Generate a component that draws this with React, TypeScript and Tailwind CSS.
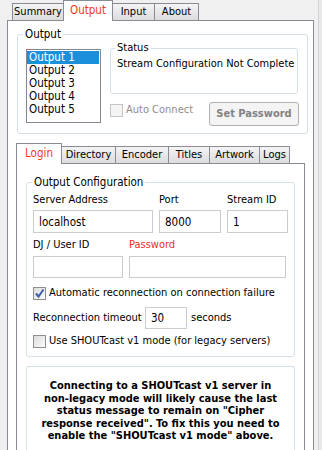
import React from "react";

const TopTab = ({ label, w, active }: { label: string; w: string; active?: boolean }) =>
  active ? (
    <div
      className={`${w} h-[21px] -mb-px -ml-px bg-white border border-b-0 border-[#898c95] flex items-center justify-center text-[11.5px] text-[#f5371b] relative z-10 pb-[3px]`}
    >
      {label}
    </div>
  ) : (
    <div
      className={`${w} h-[17px] -ml-px first:ml-0 bg-gradient-to-b from-[#f4f4f4] to-[#dcdcdc] border border-b-0 border-[#898c95] flex items-center justify-center`}
    >
      {label}
    </div>
  );

const Check = ({ checked, disabled }: { checked?: boolean; disabled?: boolean }) => (
  <div
    className={
      disabled
        ? "w-[13px] h-[13px] border border-[#c5c5c5] bg-[#f4f4f4] shrink-0"
        : "w-[13px] h-[13px] border border-[#8e8f8f] bg-gradient-to-br from-[#dcdcdc] to-[#fbfbfb] shrink-0 flex items-center justify-center"
    }
  >
    {checked && (
      <svg width="11" height="11" viewBox="0 0 11 11">
        <path d="M2 5.5 L4.5 8.5 L9.5 1.5" stroke="#3d5ea8" strokeWidth="2" fill="none" />
      </svg>
    )}
  </div>
);

const Input = ({ w, h, value }: { w: string; h: string; value?: string }) => (
  <div className={`${w} ${h} border border-[#c9cdd2] bg-white flex items-center pl-[5px] text-[11.5px]`}>
    {value}
  </div>
);

export default function App() {
  const outputs = ["Output 1", "Output 2", "Output 3", "Output 4", "Output 5"];
  return (
    <div className="w-[322px] h-[450px] overflow-hidden bg-[#f0f0f0] flex font-['DejaVu_Sans_Condensed','Liberation_Sans',sans-serif] text-[11px] leading-[14px] text-black">
      <div className="w-[7px] shrink-0" />
      <div className="w-[307px] shrink-0 flex flex-col">
        {/* main tabs */}
        <div className="h-[20px] flex items-end pl-[5px] relative z-10">
          <TopTab label="Summary" w="w-[52px]" />
          <TopTab label="Output" w="w-[50px]" active />
          <TopTab label="Input" w="w-[43px]" />
          <TopTab label="About" w="w-[45px]" />
        </div>
        <div className="flex-1 bg-white border border-b-0 border-[#898c95] flex flex-col">
          {/* Output group */}
          <fieldset className="ml-[9px] mr-[7px] mt-[6px] border border-[#d5dfe5] rounded-[3px] px-[8px] pb-[7px]">
            <legend className="px-[2px] -ml-[3px] leading-[14px] text-[11.5px]">Output</legend>
            <div className="flex">
              <div className="w-[75px] h-[74px] mt-[8px] border border-[#828790] bg-white pt-px shrink-0 text-[11.5px]">
                {outputs.map((o, i) => (
                  <div
                    key={o}
                    className={
                      i === 0
                        ? "h-[13px] leading-[13px] pl-[2px] mr-px bg-[#1c8fdb] text-white"
                        : "h-[13px] leading-[13px] pl-[2px]"
                    }
                  >
                    {o}
                  </div>
                ))}
              </div>
              <div className="ml-[9px] w-[189px] flex flex-col">
                <fieldset className="w-[188px] h-[53px] border border-[#d5dfe5] rounded-[3px] pl-[4px] pt-[2px]">
                  <legend className="px-[2px] leading-[14px]">Status</legend>
                  <div className="pl-[2px] whitespace-nowrap">Stream Configuration Not Complete</div>
                </fieldset>
                <div className="flex items-start justify-between mt-[8px]">
                  <div className="flex items-center gap-[3px] mt-px">
                    <Check disabled />
                    <span className="text-[#8d8d8d]">Auto Connect</span>
                  </div>
                  <div className="w-[90px] h-[24px] border border-[#adb2b5] rounded-[3px] bg-[#f4f4f4] flex items-center justify-center font-bold text-[#838383]">
                    Set Password
                  </div>
                </div>
              </div>
            </div>
          </fieldset>

          {/* sub tabs */}
          <div className="h-[20px] mt-[9px] ml-[8px] flex items-end relative z-10">
            <div className="w-[46px] h-[21px] -mb-px bg-white border border-b-0 border-[#898c95] flex items-center justify-center text-[11.5px] text-[#f5371b] pb-[3px]">
              Login
            </div>
            <TopTab label="Directory" w="w-[55px]" />
            <TopTab label="Encoder" w="w-[54px]" />
            <TopTab label="Titles" w="w-[42px]" />
            <TopTab label="Artwork" w="w-[51px]" />
            <TopTab label="Logs" w="w-[31px]" />
          </div>
          <div className="flex-1 ml-[8px] mr-[8px] border border-b-0 border-[#898c95] bg-white flex flex-col">
            <fieldset className="ml-[9px] mr-[9px] mt-[11px] border border-[#d5dfe5] rounded-[3px] px-[6px] pt-[4px] pb-[8px]">
              <legend className="px-[2px] -ml-px leading-[14px] text-[11.5px]">Output Configuration</legend>
              <div className="flex gap-[6px]">
                <div className="flex flex-col">
                  <span className="leading-[14px]">Server Address</span>
                  <div className="mt-[3px]">
                    <Input w="w-[120px]" h="h-[23px]" value="localhost" />
                  </div>
                </div>
                <div className="flex flex-col">
                  <span className="leading-[14px]">Port</span>
                  <div className="mt-[3px]">
                    <Input w="w-[62px]" h="h-[23px]" value="8000" />
                  </div>
                </div>
                <div className="flex flex-col">
                  <span className="leading-[14px]">Stream ID</span>
                  <div className="mt-[3px]">
                    <Input w="w-[61px]" h="h-[23px]" value="1" />
                  </div>
                </div>
              </div>
              <div className="flex gap-[6px] mt-[5px]">
                <div className="flex flex-col">
                  <span className="leading-[14px]">DJ / User ID</span>
                  <div className="mt-[4px]">
                    <Input w="w-[90px]" h="h-[22px]" />
                  </div>
                </div>
                <div className="flex flex-col">
                  <span className="leading-[14px] text-[#e8301c]">Password</span>
                  <div className="mt-[4px]">
                    <Input w="w-[157px]" h="h-[22px]" />
                  </div>
                </div>
              </div>
              <div className="flex items-center gap-[3px] mt-[8px] h-[14px]">
                <Check checked />
                <span className="whitespace-nowrap">Automatic reconnection on connection failure</span>
              </div>
              <div className="flex items-center mt-[7px]">
                <span className="w-[112px] whitespace-nowrap">Reconnection timeout</span>
                <Input w="w-[42px]" h="h-[22px]" value="30" />
                <span className="ml-[4px]">seconds</span>
              </div>
              <div className="flex items-center gap-[3px] mt-[5px] h-[14px]">
                <Check />
                <span className="whitespace-nowrap">Use SHOUTcast v1 mode (for legacy servers)</span>
              </div>
            </fieldset>
            <div className="ml-[9px] mr-[9px] mt-[9px] flex-1 border border-b-0 border-[#d5dfe5] rounded-t-[3px] pt-[13px] text-center font-bold text-[11px] leading-[12.5px]">
              <div className="whitespace-nowrap">Connecting to a SHOUTcast v1 server in</div>
              <div className="whitespace-nowrap">non-legacy mode will likely cause the last</div>
              <div className="whitespace-nowrap">status message to remain on "Cipher</div>
              <div className="whitespace-nowrap">response received". To fix this you need to</div>
              <div className="whitespace-nowrap">enable the "SHOUTcast v1 mode" above.</div>
            </div>
          </div>
        </div>
      </div>
      <div className="w-[4px] shrink-0" />
      <div className="w-px shrink-0 bg-[#d4d4d4]" />
      <div className="flex-1 bg-[#e9e9e9]" />
    </div>
  );
}
